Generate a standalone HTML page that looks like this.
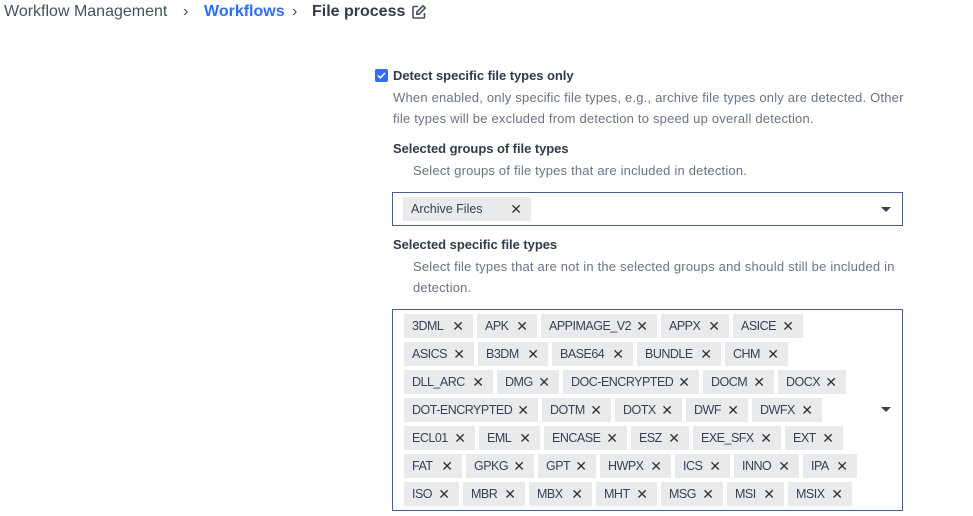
<!DOCTYPE html><html><head><meta charset="utf-8"><style>
body{margin:0;width:973px;height:516px;background:#fff;font-family:"Liberation Sans",sans-serif;color:#343a4b;position:relative;overflow:hidden}
.a{position:absolute;white-space:nowrap}
.bc{top:2px;font-size:16px;line-height:20px}
.lbl{font-size:13px;font-weight:bold;color:#343a4b;letter-spacing:-0.05px}
.d{font-size:13px;color:#6c7387;line-height:21px;letter-spacing:0.2px}
.box{position:absolute;border:1px solid #4b5f8c;box-sizing:border-box;background:#fff}
.c{position:absolute;height:24px;background:#e9eaec;box-sizing:border-box;padding:0 9px 1px 8px;display:flex;align-items:center;justify-content:space-between;font-size:12.5px;color:#3a4152;white-space:nowrap;letter-spacing:-0.5px}
.c i{font-style:normal;font-size:14px;color:#333;line-height:1;letter-spacing:0}
.arr{position:absolute;width:0;height:0;border-left:5px solid transparent;border-right:5px solid transparent;border-top:5px solid #394154}
</style></head><body>
<div class="a bc" style="left:4px;color:#4a5061">Workflow Management</div>
<div class="a bc" style="left:183px;color:#4a5061">&#8250;</div>
<div class="a bc" style="left:204px;color:#2f6ef0;font-weight:bold">Workflows</div>
<div class="a bc" style="left:292px;color:#4a5061">&#8250;</div>
<div class="a bc" style="left:312px;color:#343a4b;font-weight:bold">File process</div>
<svg class="a" style="left:411px;top:4px" width="16" height="16" viewBox="0 0 16 16" fill="none" stroke="#4a5061" stroke-width="1.6"><path d="M7 2.5H3a1 1 0 0 0-1 1V13a1 1 0 0 0 1 1h9.5a1 1 0 0 0 1-1V9"/><path d="M12 1.8l2.2 2.2L8 10.2H5.8V8z"/></svg>

<div class="a" style="left:375px;top:69px;width:13px;height:13px;background:#2f6ef0;border-radius:2px"><svg width="13" height="13" viewBox="0 0 13 13"><path d="M3 6.5l2.4 2.4L10 4" stroke="#fff" stroke-width="1.6" fill="none"/></svg></div>
<div class="a lbl" style="left:393px;top:68px">Detect specific file types only</div>
<div class="a d" style="left:393px;top:87px">When enabled, only specific file types, e.g., archive file types only are detected. Other<br>file types will be excluded from detection to speed up overall detection.</div>
<div class="a lbl" style="left:393px;top:141px">Selected groups of file types</div>
<div class="a d" style="left:413px;top:160px">Select groups of file types that are included in detection.</div>
<div class="box" style="left:392px;top:192px;width:511px;height:34px"></div>
<div class="c" style="left:403px;top:197px;width:128px;letter-spacing:0">Archive Files<i>&#x2715;</i></div>
<div class="arr" style="left:881px;top:207px"></div>
<div class="a lbl" style="left:393px;top:237px">Selected specific file types</div>
<div class="a d" style="left:413px;top:256px">Select file types that are not in the selected groups and should still be included in<br>detection.</div>
<div class="box" style="left:392px;top:309px;width:511px;height:202px"></div>
<div class="arr" style="left:881px;top:407px"></div>

<div class="c" style="left:404px;top:314px;width:69px">3DML<i>&#x2715;</i></div>
<div class="c" style="left:477px;top:314px;width:60px">APK<i>&#x2715;</i></div>
<div class="c" style="left:541px;top:314px;width:116px">APPIMAGE_V2<i>&#x2715;</i></div>
<div class="c" style="left:661px;top:314px;width:68px">APPX<i>&#x2715;</i></div>
<div class="c" style="left:733px;top:314px;width:70px">ASICE<i>&#x2715;</i></div>

<div class="c" style="left:404px;top:342px;width:70px">ASICS<i>&#x2715;</i></div>
<div class="c" style="left:478px;top:342px;width:70px">B3DM<i>&#x2715;</i></div>
<div class="c" style="left:552px;top:342px;width:81px">BASE64<i>&#x2715;</i></div>
<div class="c" style="left:637px;top:342px;width:84px">BUNDLE<i>&#x2715;</i></div>
<div class="c" style="left:725px;top:342px;width:63px">CHM<i>&#x2715;</i></div>

<div class="c" style="left:404px;top:370px;width:89px">DLL_ARC<i>&#x2715;</i></div>
<div class="c" style="left:497px;top:370px;width:62px">DMG<i>&#x2715;</i></div>
<div class="c" style="left:563px;top:370px;width:136px">DOC-ENCRYPTED<i>&#x2715;</i></div>
<div class="c" style="left:703px;top:370px;width:71px">DOCM<i>&#x2715;</i></div>
<div class="c" style="left:778px;top:370px;width:68px">DOCX<i>&#x2715;</i></div>

<div class="c" style="left:404px;top:398px;width:134px">DOT-ENCRYPTED<i>&#x2715;</i></div>
<div class="c" style="left:542px;top:398px;width:69px">DOTM<i>&#x2715;</i></div>
<div class="c" style="left:615px;top:398px;width:67px">DOTX<i>&#x2715;</i></div>
<div class="c" style="left:686px;top:398px;width:62px">DWF<i>&#x2715;</i></div>
<div class="c" style="left:752px;top:398px;width:70px">DWFX<i>&#x2715;</i></div>

<div class="c" style="left:404px;top:426px;width:71px">ECL01<i>&#x2715;</i></div>
<div class="c" style="left:479px;top:426px;width:61px">EML<i>&#x2715;</i></div>
<div class="c" style="left:544px;top:426px;width:83px">ENCASE<i>&#x2715;</i></div>
<div class="c" style="left:631px;top:426px;width:58px">ESZ<i>&#x2715;</i></div>
<div class="c" style="left:693px;top:426px;width:88px">EXE_SFX<i>&#x2715;</i></div>
<div class="c" style="left:785px;top:426px;width:58px">EXT<i>&#x2715;</i></div>

<div class="c" style="left:404px;top:454px;width:58px">FAT<i>&#x2715;</i></div>
<div class="c" style="left:466px;top:454px;width:68px">GPKG<i>&#x2715;</i></div>
<div class="c" style="left:538px;top:454px;width:58px">GPT<i>&#x2715;</i></div>
<div class="c" style="left:600px;top:454px;width:71px">HWPX<i>&#x2715;</i></div>
<div class="c" style="left:675px;top:454px;width:55px">ICS<i>&#x2715;</i></div>
<div class="c" style="left:734px;top:454px;width:65px">INNO<i>&#x2715;</i></div>
<div class="c" style="left:803px;top:454px;width:54px">IPA<i>&#x2715;</i></div>

<div class="c" style="left:404px;top:482px;width:55px">ISO<i>&#x2715;</i></div>
<div class="c" style="left:463px;top:482px;width:62px">MBR<i>&#x2715;</i></div>
<div class="c" style="left:529px;top:482px;width:63px">MBX<i>&#x2715;</i></div>
<div class="c" style="left:596px;top:482px;width:61px">MHT<i>&#x2715;</i></div>
<div class="c" style="left:661px;top:482px;width:62px">MSG<i>&#x2715;</i></div>
<div class="c" style="left:727px;top:482px;width:57px">MSI<i>&#x2715;</i></div>
<div class="c" style="left:788px;top:482px;width:64px">MSIX<i>&#x2715;</i></div>
</body></html>
